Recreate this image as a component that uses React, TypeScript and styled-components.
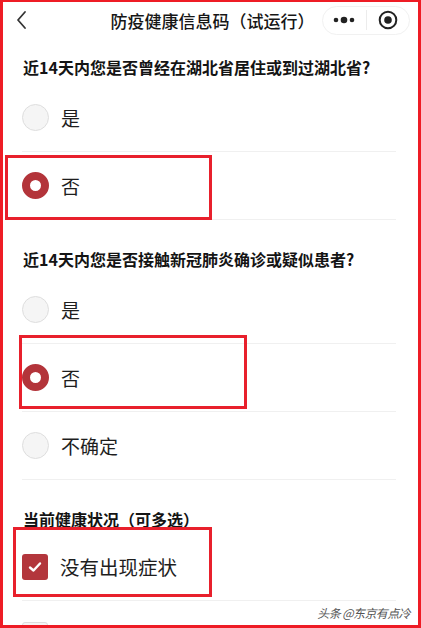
import styled, { createGlobalStyle, css } from 'styled-components';

const GlobalStyle = createGlobalStyle`
  html, body {
    margin: 0;
    padding: 0;
    background: #ffffff;
  }
  body {
    font-family: "Noto Sans CJK SC", "Noto Sans", sans-serif;
    color: #1a1a1a;
  }
`;

const Frame = styled.div`
  position: relative;
  box-sizing: border-box;
  width: 421px;
  height: 628px;
  border: 3px solid #ee1c25;
  border-top-width: 2px;
  overflow: hidden;
  background: #fff;
`;

const NavBar = styled.div`
  display: grid;
  grid-template-columns: 88px 1fr 88px;
  align-items: center;
  height: 36px;
  padding: 0 8px 0 12px;
`;

const BackButton = styled.div`
  display: flex;
  align-items: center;
  height: 36px;
`;

const Title = styled.div`
  text-align: center;
  font-size: 17px;
  font-weight: 500;
  color: #161616;
  white-space: nowrap;
`;

const Capsule = styled.div`
  display: flex;
  align-items: center;
  height: 29px;
  border: 1px solid #f1f1f1;
  border-radius: 15px;
  box-sizing: border-box;
`;

const CapsuleHalf = styled.div`
  flex: 1;
  display: flex;
  align-items: center;
  justify-content: center;
  height: 100%;
`;

const CapsuleDivider = styled.div`
  width: 1px;
  height: 20px;
  background: #ececec;
`;

const Section = styled.section<{ $first?: boolean }>`
  padding-top: ${(p) => (p.$first ? '18px' : '28px')};
`;

const Question = styled.div<{ $tight?: boolean }>`
  padding: 0 20px ${(p) => (p.$tight ? '3px' : '6px')} 20px;
  font-size: 16px;
  line-height: 22px;
  font-weight: 700;
  color: #141414;
  white-space: nowrap;
`;

const OptionRow = styled.div`
  position: relative;
  display: flex;
  align-items: center;
  gap: 12px;
  height: 67px;
  margin: 0 22px 0 19px;
  border-bottom: 1px solid #f0f0f0;
`;

const OptionLabel = styled.span<{ $big?: boolean }>`
  font-size: ${(p) => (p.$big ? '19.5px' : '19px')};
  color: #1e1e1e;
`;

const Radio = styled.span<{ $checked?: boolean }>`
  box-sizing: border-box;
  width: 27px;
  height: 27px;
  border-radius: 50%;
  flex-shrink: 0;
  ${(p) =>
    p.$checked
      ? css`
          border: 8px solid #b3343a;
          background: #fff;
        `
      : css`
          border: 1px solid #dedede;
          background: #f5f5f5;
        `}
`;

const CheckBox = styled.span<{ $checked?: boolean }>`
  box-sizing: border-box;
  display: flex;
  align-items: center;
  justify-content: center;
  width: 26px;
  height: 26px;
  border-radius: 3px;
  flex-shrink: 0;
  ${(p) =>
    p.$checked
      ? css`
          background: #b3363c;
        `
      : css`
          border: 1px solid #dedede;
          background: #f5f5f5;
        `}
`;

// red annotation rectangles drawn over the chosen answers
const Marker = styled.div<{ $l: number; $t: number; $w: number; $h: number }>`
  position: absolute;
  left: ${(p) => p.$l}px;
  top: ${(p) => p.$t}px;
  width: ${(p) => p.$w}px;
  height: ${(p) => p.$h}px;
  box-sizing: border-box;
  border: 3px solid #e8202c;
  pointer-events: none;
`;

const Watermark = styled.div`
  position: absolute;
  right: 8px;
  bottom: 4px;
  font-size: 12px;
  line-height: 16px;
  color: #555;
  font-style: italic;
  letter-spacing: -0.6px;
`;

const ChevronLeft = () => (
  <svg width="14" height="20" viewBox="0 0 14 20">
    <path d="M10 2 L3 10 L10 18" fill="none" stroke="#333" strokeWidth="1.8" strokeLinecap="round" strokeLinejoin="round" />
  </svg>
);

const MoreDots = () => (
  <svg width="22" height="8" viewBox="0 0 22 8">
    <circle cx="3" cy="4" r="2.3" fill="#222" />
    <circle cx="11" cy="4" r="3.3" fill="#222" />
    <circle cx="19" cy="4" r="2.3" fill="#222" />
  </svg>
);

const CloseTarget = () => (
  <svg width="20" height="20" viewBox="0 0 20 20">
    <circle cx="10" cy="10" r="8.3" fill="none" stroke="#222" strokeWidth="2" />
    <circle cx="10" cy="10" r="3.8" fill="#222" />
  </svg>
);

const Check = () => (
  <svg width="14" height="12" viewBox="0 0 14 12">
    <path d="M2 6.5 L5.5 9.5 L12 2.5" fill="none" stroke="#fff" strokeWidth="2.4" strokeLinecap="round" strokeLinejoin="round" />
  </svg>
);

function App() {
  return (
    <>
      <GlobalStyle />
      <Frame>
        <NavBar>
          <BackButton>
            <ChevronLeft />
          </BackButton>
          <Title>防疫健康信息码（试运行）</Title>
          <Capsule>
            <CapsuleHalf>
              <MoreDots />
            </CapsuleHalf>
            <CapsuleDivider />
            <CapsuleHalf>
              <CloseTarget />
            </CapsuleHalf>
          </Capsule>
        </NavBar>

        <Section $first>
          <Question>近14天内您是否曾经在湖北省居住或到过湖北省?</Question>
          <OptionRow>
            <Radio />
            <OptionLabel>是</OptionLabel>
          </OptionRow>
          <OptionRow>
            <Radio $checked />
            <OptionLabel>否</OptionLabel>
            <Marker $l={-17} $t={3} $w={207} $h={65} />
          </OptionRow>
        </Section>

        <Section>
          <Question>近14天内您是否接触新冠肺炎确诊或疑似患者?</Question>
          <OptionRow>
            <Radio />
            <OptionLabel>是</OptionLabel>
          </OptionRow>
          <OptionRow>
            <Radio $checked />
            <OptionLabel>否</OptionLabel>
            <Marker $l={-3} $t={-9} $w={228} $h={74} />
          </OptionRow>
          <OptionRow>
            <Radio />
            <OptionLabel>不确定</OptionLabel>
          </OptionRow>
        </Section>

        <Section>
          <Question $tight>当前健康状况（可多选）</Question>
          <OptionRow>
            <CheckBox $checked>
              <Check />
            </CheckBox>
            <OptionLabel $big>没有出现症状</OptionLabel>
            <Marker $l={-9} $t={-6} $w={199} $h={70} />
          </OptionRow>
          <OptionRow>
            <CheckBox />
          </OptionRow>
        </Section>

        <Watermark>头条 @东京有点冷</Watermark>
      </Frame>
    </>
  );
}

export default App;
